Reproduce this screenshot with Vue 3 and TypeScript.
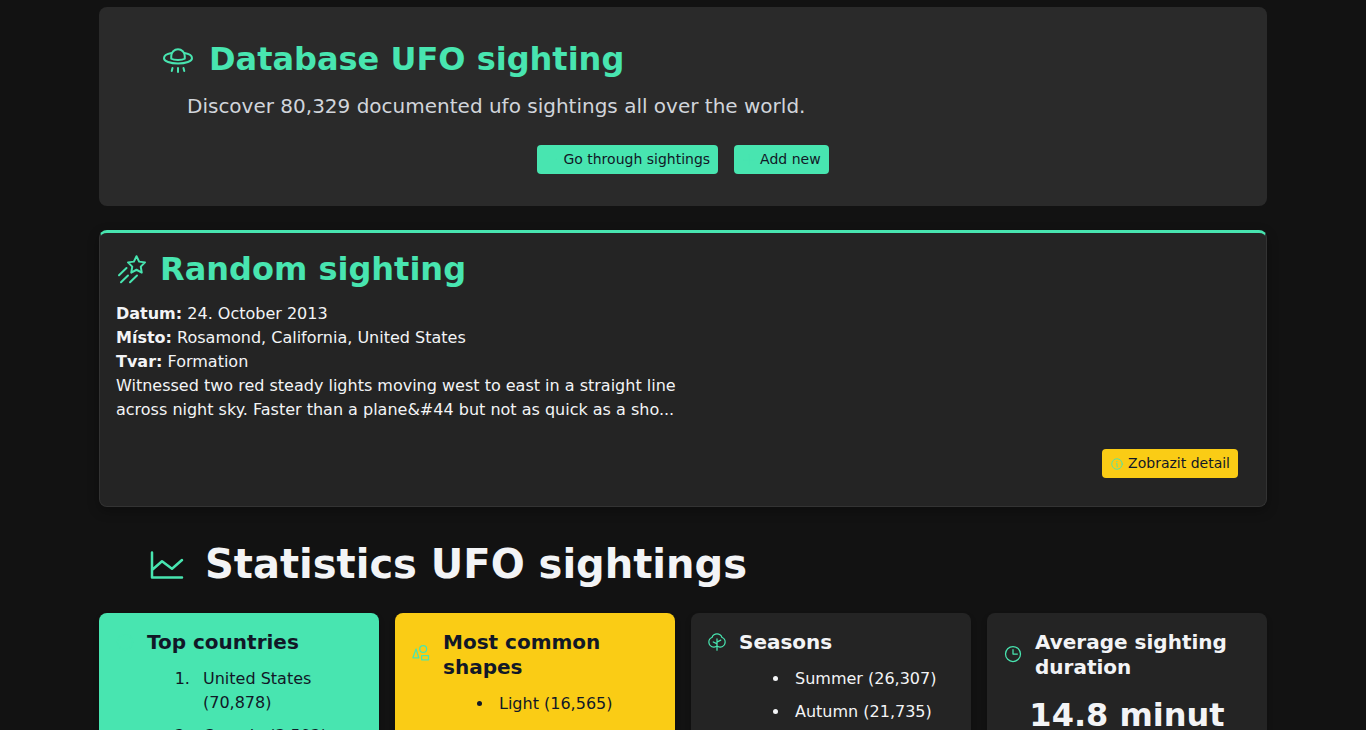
<script setup lang="ts">
interface Entry {
  name: string
  count: string
}

const countries: Entry[] = [
  { name: 'United States', count: '70,878' },
  { name: 'Canada', count: '3,592' },
]
const shapes: Entry[] = [{ name: 'Light', count: '16,565' }]
const seasons: Entry[] = [
  { name: 'Summer', count: '26,307' },
  { name: 'Autumn', count: '21,735' },
]
</script>

<template>
  <main class="page">
    <section class="hero">
      <div class="intro">
        <h1 class="title">
          <svg class="icon" viewBox="0 0 256 256" aria-hidden="true">
            <path d="M76 80C40 86 16 102 16 122c0 24 50 42 112 42s112-18 112-42c0-20-24-36-60-42" />
            <path d="M74 104a54 54 0 0 1 108 0v22s-16 10-54 10-54-10-54-10Z" />
            <path d="M128 200v32M84 200l-6 24M172 200l6 24" />
          </svg>
          Database UFO sighting
        </h1>
        <p class="lead">Discover 80,329 documented ufo sightings all over the world.</p>
      </div>
      <div class="actions">
        <button type="button" class="btn">
          <svg class="icon" viewBox="0 0 256 256" aria-hidden="true"><circle cx="116" cy="116" r="84" /><path d="m176 176 48 48" /></svg>
          Go through sightings
        </button>
        <button type="button" class="btn">
          <svg class="icon" viewBox="0 0 256 256" aria-hidden="true"><path d="M40 128h176M128 40v176" /></svg>
          Add new
        </button>
      </div>
    </section>

    <article class="random">
      <h2 class="title title-near">
        <svg class="icon" viewBox="0 0 256 256" aria-hidden="true">
          <path d="m164 26 21 43 47 6-34 34 8 48-42-23-42 23 8-48-34-34 47-6Z" />
          <path d="m84 120-60 58M96 180l-56 54M168 180l-56 54" />
        </svg>
        Random sighting
      </h2>
      <div class="details">
        <p><strong>Datum:</strong> 24. October 2013</p>
        <p><strong>Místo:</strong> Rosamond, California, United States</p>
        <p><strong>Tvar:</strong> Formation</p>
        <p>Witnessed two red steady lights moving west to east in a straight line across night sky. Faster than a plane&amp;#44 but not as quick as a sho...</p>
      </div>
      <div class="more">
        <button type="button" class="btn btn-yellow">
          <svg class="icon" viewBox="0 0 256 256" aria-hidden="true"><circle cx="128" cy="128" r="96" /><path d="M120 120h8v56h8" /><circle class="dot" cx="126" cy="84" r="12" /></svg>
          Zobrazit detail
        </button>
      </div>
    </article>

    <section>
      <h2 class="stats-title">
        <svg class="icon" viewBox="0 0 256 256" aria-hidden="true"><path d="M224 208H32V48M224 96l-64 56-64-48-64 56" /></svg>
        Statistics UFO sightings
      </h2>
      <div class="grid">
        <article class="card green">
          <h3>
            <svg class="icon" viewBox="0 0 256 256" aria-hidden="true"><circle cx="128" cy="128" r="96" /><path d="M32 128h192" /></svg>
            Top countries
          </h3>
          <ol>
            <li v-for="c in countries" :key="c.name">{{ c.name }} ({{ c.count }})</li>
          </ol>
        </article>
        <article class="card yellow">
          <h3>
            <svg class="icon" viewBox="0 0 256 256" aria-hidden="true"><path d="M64 64 24 176h76Z" /><circle cx="156" cy="64" r="44" /><path d="M136 150h88v52h-88z" /></svg>
            Most common shapes
          </h3>
          <ul>
            <li v-for="s in shapes" :key="s.name">{{ s.name }} ({{ s.count }})</li>
          </ul>
        </article>
        <article class="card">
          <h3>
            <svg class="icon" viewBox="0 0 256 256" aria-hidden="true"><path class="solid" d="M198.1 62.6a76 76 0 0 0-140.2 0A71.71 71.71 0 0 0 16 127.8C15.9 166 48 199 86.14 200A72.22 72.22 0 0 0 120 192.47V232a8 8 0 0 0 16 0V192.47A72.17 72.17 0 0 0 168 200l1.82 0C208 199 240.11 166 240 127.8A71.71 71.71 0 0 0 198.1 62.6ZM169.45 184a55.61 55.61 0 0 1-32.52-9.4q-.47-.3-.93-.57V132.94l43.58-21.78a8 8 0 1 0-7.16-14.32L136 115.06V88a8 8 0 0 0-16 0v51.06L83.58 120.84a8 8 0 1 0-7.16 14.32L120 156.94V174q-.47.27-.93.57A55.7 55.7 0 0 1 86.55 184a56 56 0 0 1-22-106.86 15.9 15.9 0 0 0 8.05-8.33 60 60 0 0 1 110.7 0 15.9 15.9 0 0 0 8.05 8.33 56 56 0 0 1-22 106.86Z" /></svg>
            Seasons
          </h3>
          <ul>
            <li v-for="s in seasons" :key="s.name">{{ s.name }} ({{ s.count }})</li>
          </ul>
        </article>
        <article class="card">
          <h3>
            <svg class="icon" viewBox="0 0 256 256" aria-hidden="true"><circle cx="128" cy="128" r="96" /><path d="M128 72v56h56" /></svg>
            Average sighting duration
          </h3>
          <p class="duration">14.8 minut</p>
        </article>
      </div>
    </section>
  </main>
</template>

<style>
body {
  background: #121212;
}
html {
  scrollbar-width: none;
}
</style>

<style scoped>
.page {
  box-sizing: border-box;
  max-width: 1200px;
  margin: 0 auto;
  padding: 7px 16px 24px;
  color: #f3f4f6;
  font: 16px/24px "DejaVu Sans", sans-serif;
}
h1, h2, h3, p, ul, ol {
  margin: 0;
}
.icon {
  flex: none;
  width: 32px;
  height: 32px;
  fill: none;
  stroke: #48e5b0;
  stroke-width: 16;
  stroke-linecap: round;
  stroke-linejoin: round;
}
.icon .solid, .icon .dot {
  fill: #48e5b0;
  stroke: none;
}
.hero {
  padding: 32px;
  border-radius: 8px;
  background: #2a2a2a;
}
.intro {
  padding: 0 31px;
}
.title {
  display: flex;
  align-items: center;
  gap: 15px;
  color: #48e5b0;
  font-size: 32px;
  line-height: 40px;
}
.title-near {
  gap: 12px;
}
.lead {
  margin-top: 12px;
  padding-left: 25px;
  color: #d1d5db;
  font-size: 20px;
  line-height: 30px;
}
.actions {
  display: flex;
  justify-content: center;
  gap: 16px;
  margin-top: 24px;
}
.btn {
  display: flex;
  align-items: center;
  gap: 4px;
  padding: 4px 8px;
  border: 0;
  border-radius: 4px;
  background: #48e5b0;
  color: #111827;
  font: 14px/21px "DejaVu Sans", sans-serif;
  cursor: pointer;
}
.btn .icon {
  width: 14px;
  height: 14px;
}
.btn-yellow {
  background: #facc15;
}
.random {
  margin-top: 24px;
  padding: 16px;
  border: 1px solid #333;
  border-top: 3px solid #48e5b0;
  border-radius: 8px;
  background: #242424;
  box-shadow: 0 4px 12px rgba(0, 0, 0, 0.3);
}
.details {
  max-width: 576px;
  margin-top: 13px;
}
.more {
  display: flex;
  justify-content: flex-end;
  padding: 27px 12px 12px;
}
.stats-title {
  display: flex;
  align-items: center;
  gap: 18px;
  margin: 32px 0 24px;
  padding-left: 48px;
  font-size: 40px;
  line-height: 50px;
}
.stats-title .icon {
  width: 40px;
  height: 40px;
  margin-top: 2px;
}
.grid {
  display: grid;
  grid-template-columns: repeat(4, 1fr);
  gap: 16px;
}
.card {
  padding: 17px 16px 16px;
  border-radius: 8px;
  background: #242424;
  box-shadow: 0 4px 6px rgba(0, 0, 0, 0.2);
}
.card h3 {
  display: flex;
  align-items: center;
  gap: 12px;
  margin-bottom: 12px;
  font-size: 20px;
  line-height: 25px;
}
.card .icon {
  width: 20px;
  height: 20px;
  margin-bottom: 2px;
}
.green {
  background: #48e5b0;
  color: #111827;
}
.yellow {
  background: #facc15;
  color: #111827;
}
.card ol {
  padding-left: 80px;
}
.card ul {
  padding-left: 83px;
}
.card li {
  margin-bottom: 9px;
}
.card ol li {
  padding-left: 8px;
}
.card ul li {
  padding-left: 5px;
}
.duration {
  font-size: 32px;
  font-weight: 700;
  line-height: 46px;
  text-align: center;
}
</style>
